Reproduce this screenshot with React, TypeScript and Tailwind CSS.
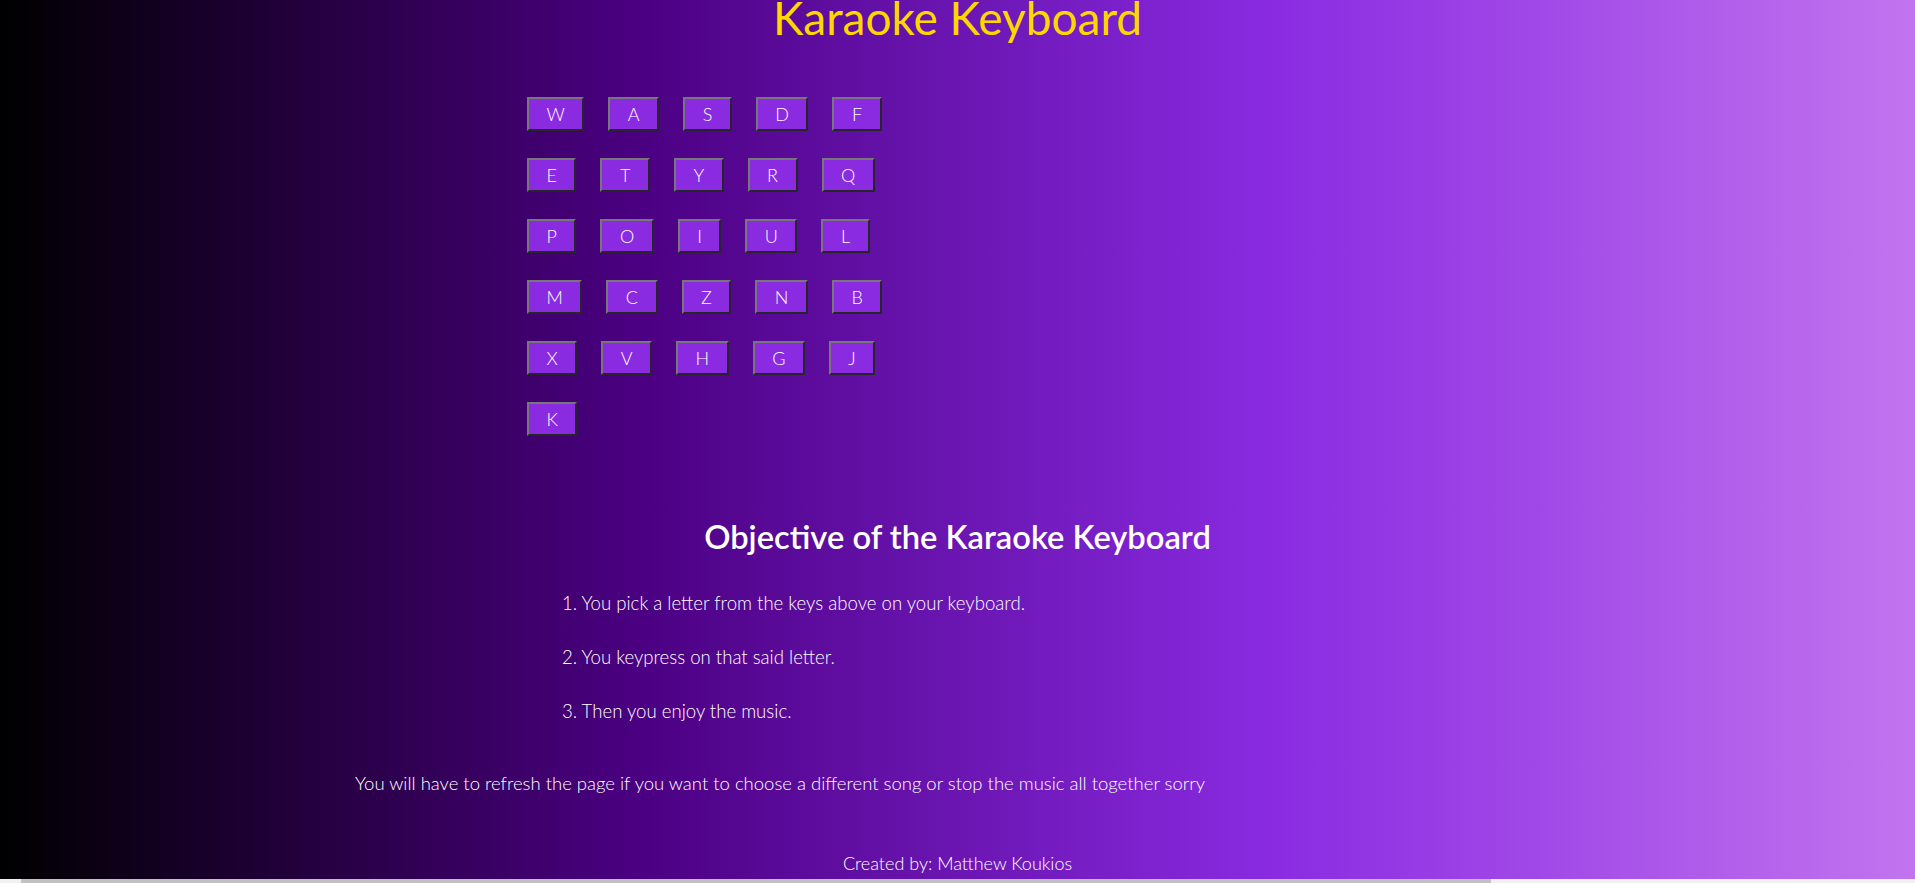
import React from "react";

const rows: string[][] = [
  ["W", "A", "S", "D", "F"],
  ["E", "T", "Y", "R", "Q"],
  ["P", "O", "I", "U", "L"],
  ["M", "C", "Z", "N", "B"],
  ["X", "V", "H", "G", "J"],
  ["K"],
];

function Key({ k }: { k: string }) {
  return (
    <button className="h-[34px] px-[17.5px] bg-[#8a2be2] text-white text-[18px] font-light leading-none border-2 border-t-[#777777] border-l-[#777777] border-r-[#262626] border-b-[#262626]">
      {k}
    </button>
  );
}

export default function App() {
  return (
    <div className="w-[1915px] h-[883px] overflow-hidden flex flex-col font-['Lato','Open_Sans',sans-serif]">
      <div className="h-[879px] flex flex-col bg-[linear-gradient(to_right,#000000,#4b0082,#8a2be2,#c274ef)]">
        <h1 className="pt-[1px] text-center text-[#ffd700] text-[46px] leading-[34px] font-normal">
          Karaoke Keyboard
        </h1>
        <div className="pl-[527px] mt-[62px] flex flex-col gap-[27px]">
          {rows.map((r, i) => (
            <div key={i} className="flex gap-6">
              {r.map((k) => (
                <Key key={k} k={k} />
              ))}
            </div>
          ))}
        </div>
        <h2 className="mt-[81px] text-center text-white text-[32.7px] leading-[40px] font-semibold">
          Objective of the Karaoke Keyboard
        </h2>
        <div className="pl-[562px] mt-[34px] flex flex-col gap-[30px] text-white text-[18.6px] leading-[24px] font-light">
          <p>1. You pick a letter from the keys above on your keyboard.</p>
          <p>2. You keypress on that said letter.</p>
          <p>3. Then you enjoy the music.</p>
        </div>
        <p className="pl-[355px] mt-[48px] text-white text-[18.5px] leading-[24px] font-light">
          You will have to refresh the page if you want to choose a different song or stop the music all together sorry
        </p>
        <p className="mt-[56px] text-center text-white text-[18px] leading-[24px] font-light">
          Created by: Matthew Koukios
        </p>
      </div>
      <div className="h-[4px] flex bg-[#f1f1f1]">
        <div className="ml-[21px] w-[1470px] bg-[#c1c1c1]" />
      </div>
    </div>
  );
}
